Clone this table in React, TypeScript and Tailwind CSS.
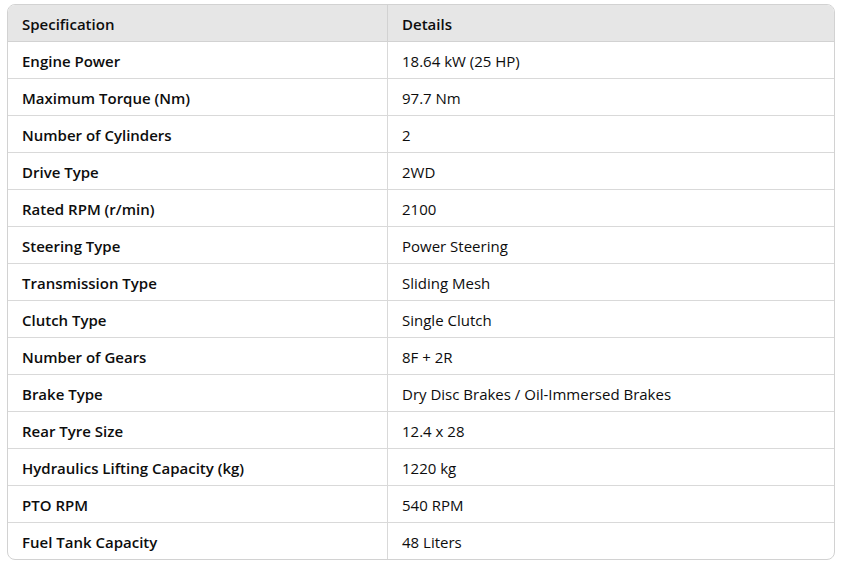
const ROWS: [string, string][] = [
  ["Engine Power", "18.64 kW (25 HP)"],
  ["Maximum Torque (Nm)", "97.7 Nm"],
  ["Number of Cylinders", "2"],
  ["Drive Type", "2WD"],
  ["Rated RPM (r/min)", "2100"],
  ["Steering Type", "Power Steering"],
  ["Transmission Type", "Sliding Mesh"],
  ["Clutch Type", "Single Clutch"],
  ["Number of Gears", "8F + 2R"],
  ["Brake Type", "Dry Disc Brakes / Oil-Immersed Brakes"],
  ["Rear Tyre Size", "12.4 x 28"],
  ["Hydraulics Lifting Capacity (kg)", "1220 kg"],
  ["PTO RPM", "540 RPM"],
  ["Fuel Tank Capacity", "48 Liters"],
]

export default function App() {
  return (
    <div className="w-[841px] h-[566px] bg-white pt-[4px] pl-[7px] font-['Open_Sans','Noto_Sans',sans-serif] text-[15px] text-[#0d0d0d]">
      <div className="w-[828px] rounded-[8px] border border-[#d2d2d2] overflow-hidden">
        <div className="grid grid-cols-[380px_1fr] h-[37px] bg-[#e6e6e6] border-b border-[#d2d2d2] font-semibold">
          <div className="flex items-center pl-[14px] pt-[2px] border-r border-[#d2d2d2]">Specification</div>
          <div className="flex items-center pl-[14px] pt-[2px]">Details</div>
        </div>
        {ROWS.map(([spec, detail], i) => (
          <div
            key={spec}
            className={
              i < ROWS.length - 1
                ? "grid grid-cols-[380px_1fr] h-[37px] border-b border-[#d9d9d9]"
                : "grid grid-cols-[380px_1fr] h-[36px]"
            }
          >
            <div className="flex items-center pl-[14px] pt-[2px] border-r border-[#d9d9d9] font-semibold">{spec}</div>
            <div className="flex items-center pl-[14px] pt-[2px]">{detail}</div>
          </div>
        ))}
      </div>
    </div>
  )
}
